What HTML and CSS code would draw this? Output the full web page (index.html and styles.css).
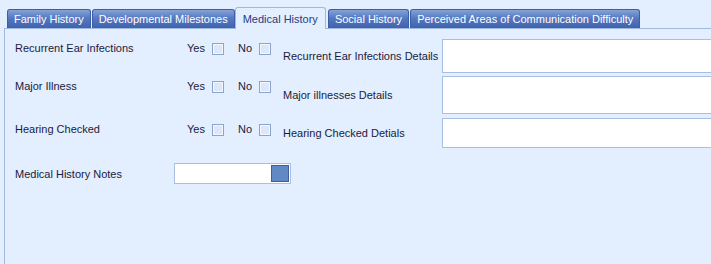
FILE: index.html
```html
<!DOCTYPE html>
<html lang="en">

<head>
    <meta charset="UTF-8">
    <meta name="viewport" content="width=device-width, initial-scale=1.0">
    <title>Medical History</title>
    <link rel="stylesheet" href="styles.css">
</head>

<body>

    <div class="tabs">
        <div class="tab">Family History</div>
        <div class="tab">Developmental Milestones</div>
        <div class="tab active">Medical History</div>
        <div class="tab">Social History</div>
        <div class="tab">Perceived Areas of Communication Difficulty</div>
    </div>

    <div class="panel">
        <div class="left-col">
            <div class="check-row row-1">
                <span class="label">Recurrent Ear Infections</span>
                <span class="opt">Yes</span><span class="box"></span>
                <span class="opt no">No</span><span class="box"></span>
            </div>
            <div class="check-row row-2">
                <span class="label">Major Illness</span>
                <span class="opt">Yes</span><span class="box"></span>
                <span class="opt no">No</span><span class="box"></span>
            </div>
            <div class="check-row row-3">
                <span class="label">Hearing Checked</span>
                <span class="opt">Yes</span><span class="box"></span>
                <span class="opt no">No</span><span class="box"></span>
            </div>
            <div class="notes-row">
                <span class="notes-label">Medical History Notes</span>
                <div class="notes-input">
                    <span class="notes-btn"></span>
                </div>
            </div>
        </div>

        <div class="right-col">
            <div class="detail-row">
                <span class="detail-label">Recurrent Ear Infections Details</span>
                <div class="memo memo-1"></div>
            </div>
            <div class="detail-row">
                <span class="detail-label">Major illnesses Details</span>
                <div class="memo memo-2"></div>
            </div>
            <div class="detail-row">
                <span class="detail-label">Hearing Checked Detials</span>
                <div class="memo memo-3"></div>
            </div>
        </div>
    </div>

</body>

</html>
```

FILE: styles.css
```css
body {
    margin: 0;
    height: 264px;
    overflow: hidden;
    background-color: #e3eeff;
    font-family: "Liberation Sans", Arial, sans-serif;
    font-size: 11px;
    color: #1c1b3b;
}

.tabs {
    display: flex;
    align-items: flex-end;
    padding: 7px 0 0 7px;
    height: 28px;
    box-sizing: border-box;
}

.tab {
    height: 19px;
    box-sizing: border-box;
    padding: 0 6px;
    margin-right: 1px;
    line-height: 18px;
    color: #fff;
    background: linear-gradient(#86a3d6, #5578c0 45%, #3f63ae);
    border: 1px solid #3a5ea8;
    border-bottom: none;
    border-radius: 3px 3px 0 0;
    white-space: nowrap;
}

.tab.active {
    height: 22px;
    margin-bottom: -1px;
    position: relative;
    padding: 2px 7px 0 7px;
    color: #1f3d85;
    background: #e3eeff;
    border-color: #9fb8e0;
    margin-left: -1px;
    margin-right: 2px;
}

.panel {
    margin-left: 4px;
    border-left: 1px solid #9fb8e0;
    border-top: 1px solid #9fb8e0;
    height: 236px;
    display: flex;
    box-sizing: border-box;
}

.left-col {
    width: 268px;
    flex-shrink: 0;
    padding: 12px 0 0 10px;
}

.check-row {
    display: flex;
    align-items: flex-start;
    line-height: 14px;
}

.row-1 {
    height: 38px;
}

.row-2 {
    height: 43px;
}

.row-3 {
    height: 41px;
}

.label {
    width: 172px;
}

.opt {
    width: 25px;
}

.opt.no {
    margin-left: 14px;
    width: 21px;
}

.box {
    width: 10px;
    height: 10px;
    margin-top: 2px;
    border: 1px solid #8aa3cf;
    background-color: #dce7f8;
    box-shadow: inset 0 0 0 1px #f3f7ff;
}

.notes-row {
    display: flex;
    align-items: center;
    height: 21px;
}

.notes-label {
    width: 159px;
    flex-shrink: 0;
}

.notes-input {
    width: 114px;
    height: 19px;
    flex-shrink: 0;
    background-color: #fff;
    border: 1px solid #a9bfe2;
    display: flex;
    justify-content: flex-end;
    align-items: center;
    padding-right: 1px;
}

.notes-btn {
    width: 16px;
    height: 15px;
    background-color: #6189c6;
    border: 1px solid #3f5f9c;
}

.right-col {
    padding-top: 10px;
    flex: 1;
}

.detail-row {
    display: flex;
    align-items: center;
    margin-bottom: 3px;
}

.detail-label {
    width: 159px;
}

.memo {
    flex: 1;
    background-color: #fff;
    border: 1px solid #a9bfe2;
    border-right: none;
}

.memo-1 {
    height: 32px;
}

.memo-2 {
    height: 36px;
}

.memo-3 {
    height: 28px;
    margin-top: 1px;
}
```
